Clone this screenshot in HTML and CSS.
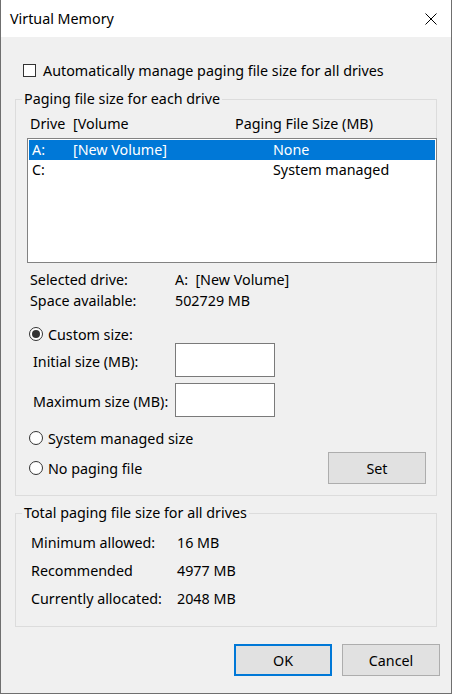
FILE: index.html
```html
<!DOCTYPE html>
<html lang="en">
  <head>
    <meta charset="UTF-8" />
    <title>Virtual Memory</title>
    <link rel="stylesheet" href="styles.css">
  </head>
  <body>
    <div class="window">
      <div class="titlebar">
        <span class="title">Virtual Memory</span>
        <svg class="close" width="12" height="12" viewBox="0 0 12 12">
          <path d="M0.5 0.5 L11.5 11.5 M11.5 0.5 L0.5 11.5" stroke="#000" stroke-width="1" fill="none" />
        </svg>
      </div>

      <div class="content">
        <label class="check-row">
          <span class="checkbox"></span>
          Automatically manage paging file size for all drives
        </label>

        <fieldset class="group drives">
          <legend>Paging file size for each drive</legend>

          <div class="list-head">
            <span>Drive</span>
            <span>[Volume</span>
            <span>Paging File Size (MB)</span>
          </div>

          <div class="listbox">
            <div class="list-row selected">
              <span>A:</span>
              <span>[New Volume]</span>
              <span>None</span>
            </div>
            <div class="list-row">
              <span>C:</span>
              <span></span>
              <span>System managed</span>
            </div>
          </div>

          <div class="info-row first">
            <span>Selected drive:</span>
            <span>A:&nbsp; [New Volume]</span>
          </div>
          <div class="info-row">
            <span>Space available:</span>
            <span>502729 MB</span>
          </div>

          <label class="radio-row custom">
            <span class="radio checked"></span>
            Custom size:
          </label>

          <div class="size-row first">
            <span>Initial size (MB):</span>
            <input type="text" class="size-input" />
          </div>
          <div class="size-row">
            <span>Maximum size (MB):</span>
            <input type="text" class="size-input" />
          </div>

          <label class="radio-row system">
            <span class="radio"></span>
            System managed size
          </label>

          <div class="last-row">
            <label class="radio-row">
              <span class="radio"></span>
              No paging file
            </label>
            <button class="btn set-btn">Set</button>
          </div>
        </fieldset>

        <fieldset class="group totals">
          <legend>Total paging file size for all drives</legend>
          <div class="total-row first">
            <span>Minimum allowed:</span>
            <span>16 MB</span>
          </div>
          <div class="total-row">
            <span>Recommended</span>
            <span>4977 MB</span>
          </div>
          <div class="total-row">
            <span>Currently allocated:</span>
            <span>2048 MB</span>
          </div>
        </fieldset>

        <div class="buttons">
          <button class="btn default">OK</button>
          <button class="btn">Cancel</button>
        </div>
      </div>
    </div>
  </body>
</html>
```

FILE: styles.css
```css
* {
  box-sizing: border-box;
}
body {
  margin: 0;
  font-family: "Noto Sans", "Open Sans", sans-serif;
  font-size: 14.3px;
  color: #000;
  background-color: #fff;
}
.window {
  width: 452px;
  height: 694px;
  border: 1px solid #6f6f6f;
  border-top: none;
  background-color: #f0f0f0;
  display: flex;
  flex-direction: column;
}
.titlebar {
  height: 37px;
  background-color: #fff;
  display: flex;
  align-items: center;
  justify-content: space-between;
  padding: 1px 14px 0 9px;
}
.title {
  line-height: 20px;
}
.close {
  display: block;
  margin-bottom: 1px;
}
.content {
  padding: 23px 0 0 0;
}
.check-row {
  display: flex;
  align-items: center;
  height: 20px;
  padding-left: 22px;
  gap: 7px;
}
.checkbox {
  width: 13px;
  height: 13px;
  border: 1px solid #333;
  background-color: #fff;
}
.group {
  margin: 0 14px;
  padding: 0 0 11px 6px;
  border: 1px solid #dcdcdc;
  min-width: 0;
}
.group legend {
  padding: 0 2px;
  line-height: 20px;
}
.drives {
  margin-top: 9px;
}
.list-head {
  display: grid;
  grid-template-columns: 43px 162px 1fr;
  padding-left: 8px;
  line-height: 20px;
  margin-top: 5px;
}
.listbox {
  margin: 4px -1px 0 5px;
  height: 125px;
  border: 1px solid #828282;
  background-color: #fff;
  padding: 1px;
}
.list-row {
  display: grid;
  grid-template-columns: 41px 200px 1fr;
  height: 20px;
  line-height: 20px;
  padding-left: 3px;
}
.list-row.selected {
  background-color: #0078d7;
  color: #fff;
}
.info-row {
  display: grid;
  grid-template-columns: 145px 1fr;
  padding-left: 8px;
  line-height: 21px;
}
.info-row.first {
  margin-top: 6px;
}
.radio-row {
  display: flex;
  align-items: center;
  gap: 5px;
  height: 20px;
  padding-left: 7px;
}
.radio {
  width: 14px;
  height: 14px;
  border: 1px solid #333;
  border-radius: 50%;
  background-color: #fff;
  display: flex;
  align-items: center;
  justify-content: center;
}
.radio.checked::after {
  content: "";
  width: 8px;
  height: 8px;
  border-radius: 50%;
  background-color: #333;
}
.custom {
  margin-top: 13px;
}
.size-row {
  display: grid;
  grid-template-columns: 142px 100px;
  align-items: center;
  padding-left: 11px;
  margin-top: 6px;
}
.size-row.first {
  margin-top: -1px;
}
.size-row span {
  padding-top: 3px;
}
.size-input {
  height: 34px;
  width: 100px;
  border: 1px solid #7a7a7a;
  background-color: #fff;
  margin: 0;
  font: inherit;
}
.system {
  margin-top: 11px;
}
.last-row {
  display: flex;
  align-items: center;
  justify-content: space-between;
  margin-top: 4px;
  padding-right: 10px;
}
.btn {
  width: 98px;
  height: 32px;
  margin: 0;
  border: 1px solid #adadad;
  background-color: #e1e1e1;
  font: inherit;
  color: #000;
}
.btn.default {
  border: 2px solid #0078d7;
}
.totals {
  margin-top: 7px;
  padding-bottom: 13px;
}
.total-row {
  display: grid;
  grid-template-columns: 146px 1fr;
  padding-left: 9px;
  height: 28px;
  line-height: 28px;
}
.total-row.first {
  margin-top: 6px;
}
.buttons {
  display: flex;
  justify-content: flex-end;
  gap: 10px;
  margin-top: 17px;
  padding-right: 11px;
}
```
